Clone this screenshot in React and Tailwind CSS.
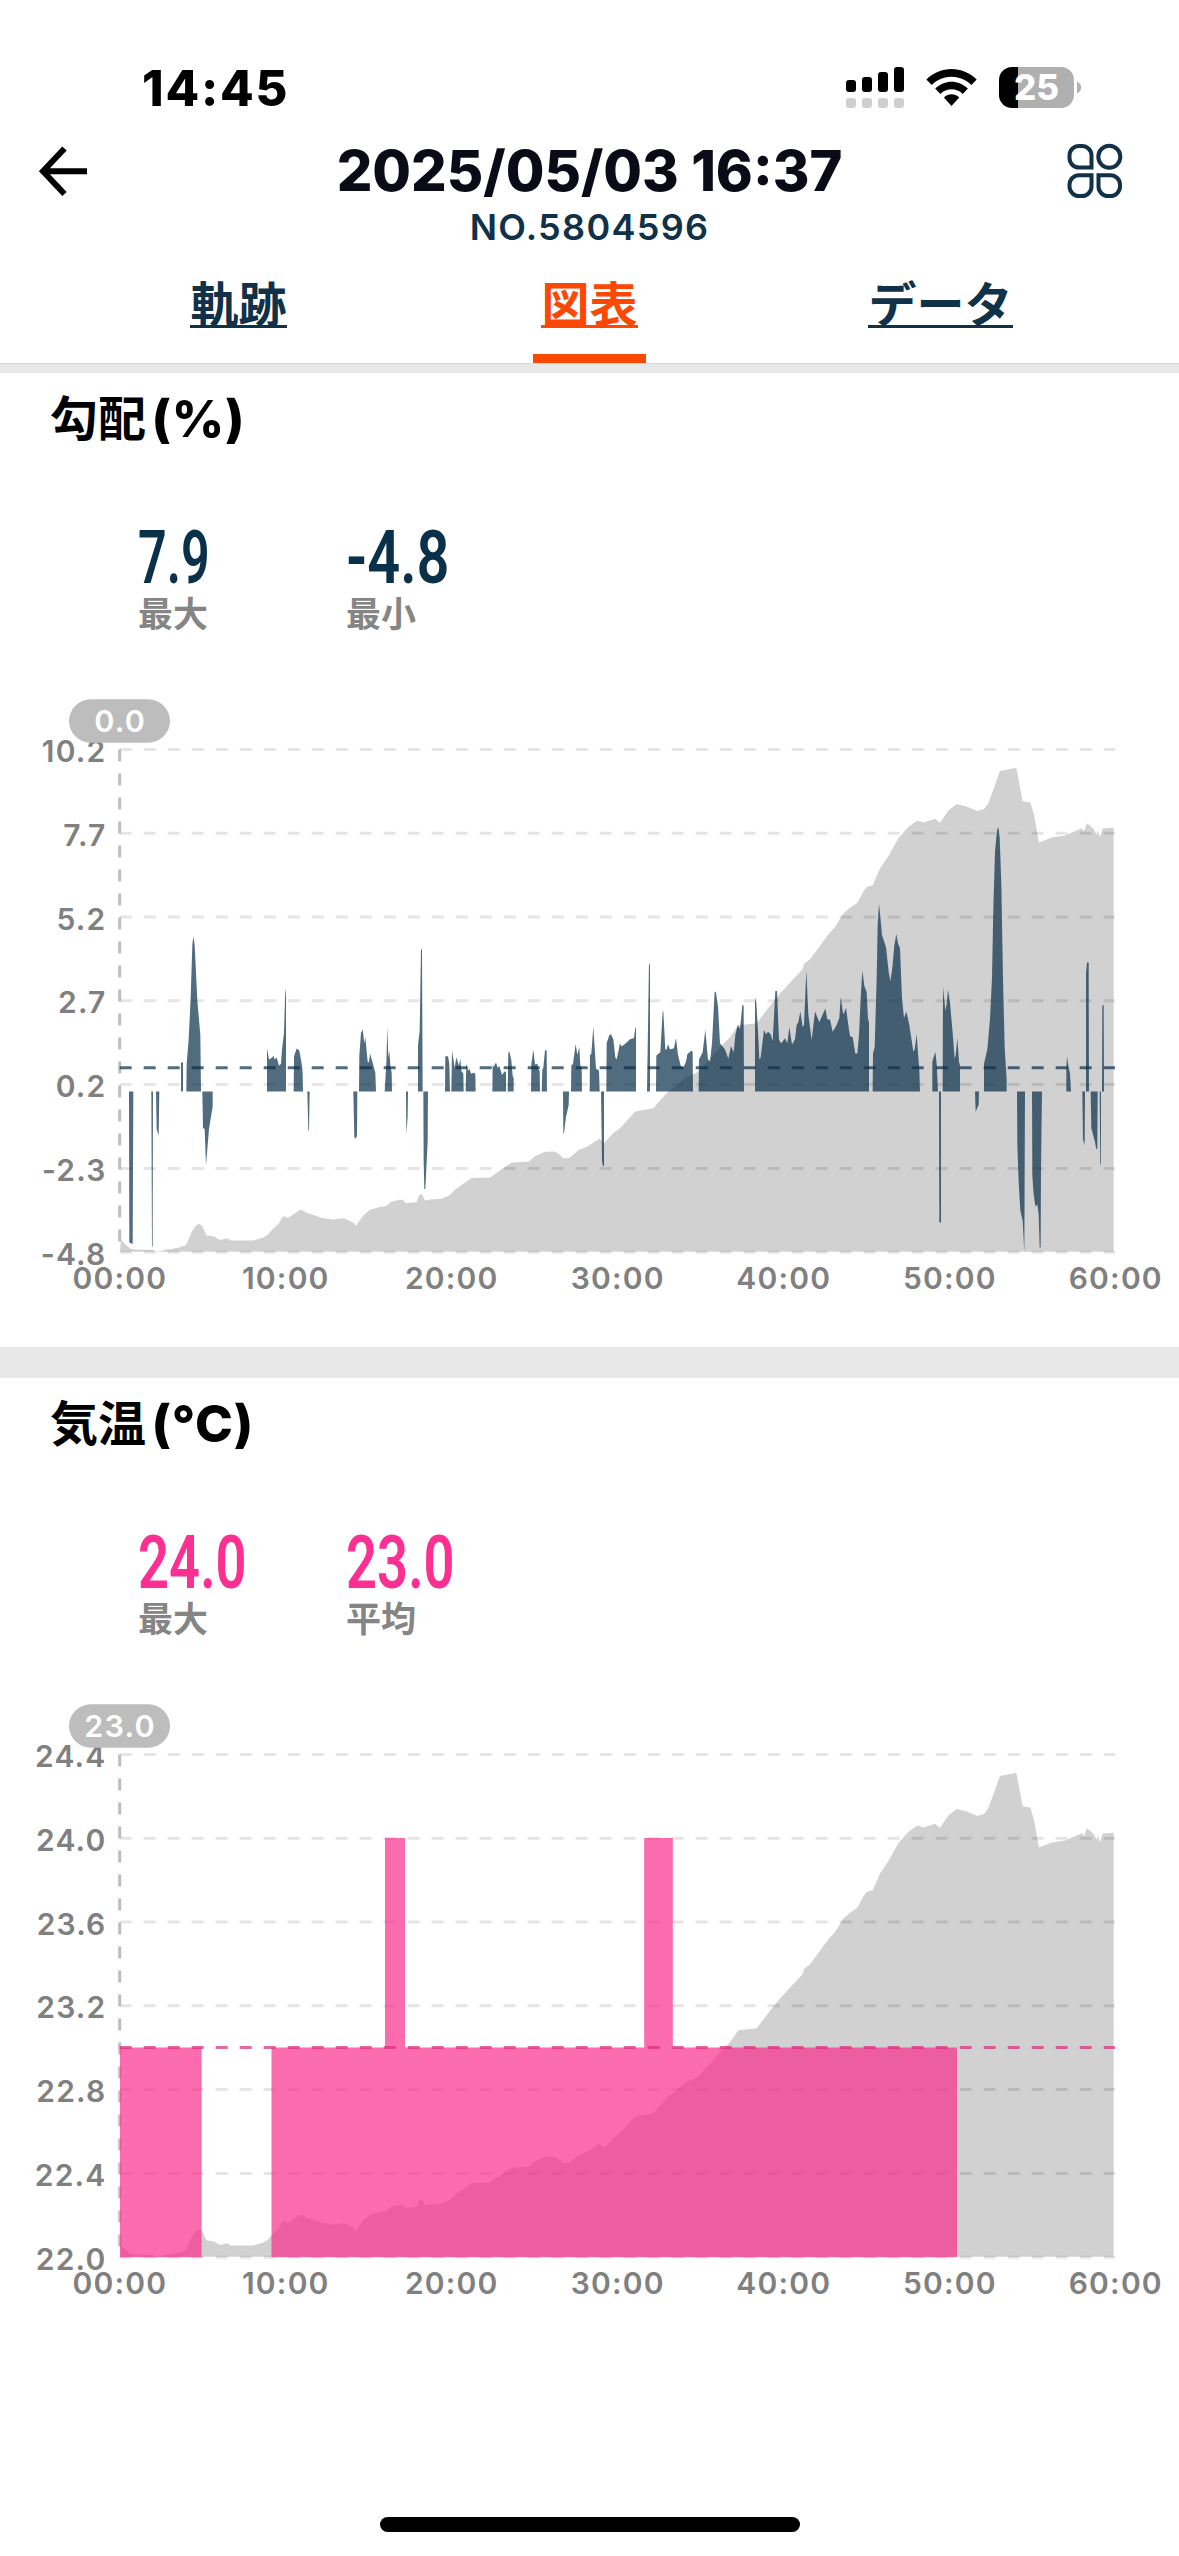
import React from 'react';

const AXIS_X = 119.7;
const END_X = 1115;
const TOP_Y = 69.4;
const STEP_Y = 83.8;
const BOTTOM_Y = TOP_Y + STEP_Y * 6;

const TIME_LABELS = ['00:00', '10:00', '20:00', '30:00', '40:00', '50:00', '60:00'];

// Track samples are split into three tiles, each with its own local origin
const TILES = [
    {
        transform: 'translate(20 0) scale(0.33333 0.40816)',
        elevation:
            '300,1401 303,1372 318,1384 330,1393 345,1395 380,1396 400,1396 403,1400 425,1399 432,1396 455,1394 480,1390 497,1385 505,1372 515,1352 527,1337 537,1332 547,1338 560,1361 580,1363 600,1372 622,1368 632,1373 700,1373 730,1366 742,1360 757,1346 775,1333 790,1313 803,1318 820,1309 842,1297 862,1306 880,1310 905,1318 940,1322 972,1319 1003,1331 1007,1338 1030,1312 1050,1298 1080,1291 1100,1288 1112,1279 1140,1273 1140,1401',
        slopes: [
            '327,1008 328,1378 338,1382 340,1008',
            '394,1008 396,1388 398,1388 399,1008',
            '408,1008 410,1100 416,1116 418,1008',
            '483,1008 483,937 489,937 489,1008',
            '499,1008 500,940 506,880 512,780 517,650 520,627 524,650 532,785 541,870 543,1008',
            '547,1008 549,1097 554,1100 558,1188 567,1100 578,1045 578,1008',
            '741,1008 741,902 747,930 757,925 760,920 764,930 770,925 777,945 783,940 786,905 792,865 796,755 798,770 798,1008',
            '821,1008 822,922 830,903 838,908 846,945 848,965 849,1008',
            '862,1008 865,1104 867,1104 869,1008',
            '1000,1008 1003,1120 1008,1124 1011,1115 1012,1008',
            '1017,1008 1018,920 1023,865 1028,856 1033,890 1036,875 1043,935 1047,937 1050,915 1058,938 1066,962 1068,1008',
            '1094,1008 1099,940 1102,850 1105,925 1108,908 1111,945 1115,962 1116,1008',
        ],
    },
    {
        transform: 'translate(400 0) scale(0.33333 0.40816)',
        elevation:
            '0,1401 0,1273 8,1274 18,1282 50,1279 57,1263 65,1259 75,1275 90,1273 125,1271 150,1262 165,1249 190,1234 215,1220 270,1219 300,1202 335,1182 385,1180 405,1167 435,1156 462,1155 475,1160 490,1172 508,1171 535,1152 565,1142 597,1124 605,1128 612,1135 640,1110 660,1098 705,1058 720,1055 740,1052 760,1049 800,1012 830,992 860,972 890,962 930,928 960,900 990,875 1015,846 1070,841 1110,798 1140,768 1140,1401',
        slopes: [
            '18,1008 19,1113 23,1070 24,1008',
            '54,1008 54,895 59,860 63,660 66,660 68,1008',
            '70,1008 71,1180 73,1247 76,1247 83,1130 84,1008',
            '135,1008 136,922 144,922 148,940 150,1008',
            '154,1008 156,908 164,950 169,925 177,945 181,928 184,958 190,965 191,1008',
            '197,1008 199,940 204,958 208,952 213,965 221,962 226,965 227,1008',
            '277,1008 278,942 281,948 288,937 293,950 298,946 306,968 315,958 318,962 318,1008',
            '323,1008 325,912 328,910 334,932 338,970 341,975 341,1008',
            '393,1008 394,942 400,905 405,942 412,940 416,955 419,958 420,1008',
            '425,1008 427,955 430,950 435,907 440,908 441,1008',
            '489,1008 490,1111 492,1110 498,1070 506,1042 507,1008',
            '513,1008 514,945 519,940 527,892 532,918 538,900 541,945 545,948 546,1008',
            '569,1008 570,920 574,915 580,850 588,952 597,957 599,1008',
            '603,1008 606,1178 609,1192 612,1190 612,1008',
            '619,1008 620,890 628,870 633,868 640,880 646,925 650,930 655,910 660,890 665,898 680,888 690,880 702,877 706,852 708,852 708,1008',
            '741,1008 745,800 747,693 750,700 750,1008',
            '768,1008 769,920 781,912 788,812 790,812 796,905 800,905 804,892 810,905 822,902 828,877 834,918 842,945 850,950 858,935 862,917 875,908 878,912 879,1008',
            '896,1008 897,930 908,912 916,857 924,930 930,935 936,890 944,763 948,765 954,800 960,890 975,905 985,928 993,897 1001,912 1006,870 1013,845 1020,855 1027,797 1031,797 1032,1008',
            '1065,1008 1065,778 1069,790 1074,860 1078,930 1082,925 1092,857 1098,868 1104,862 1112,868 1118,885 1126,762 1131,762 1137,880 1140,886 1140,1008',
        ],
    },
    {
        transform: 'translate(780 0) scale(0.33333 0.40816)',
        elevation:
            '0,1401 0,768 68,708 72,695 90,684 150,618 165,606 190,572 210,558 232,546 250,518 260,507 278,503 300,462 325,432 355,388 385,360 412,344 430,349 465,340 480,350 505,320 530,304 560,310 592,321 612,316 625,302 660,223 709,215 728,297 751,300 762,330 777,398 815,386 855,381 905,363 912,370 921,351 940,364 950,379 953,368 960,385 968,364 1001,362 1001,1401',
        slopes: [
            '0,1008 0,886 4,890 15,878 22,890 28,850 36,893 45,880 50,845 55,838 61,812 68,850 72,845 79,712 85,820 95,882 105,812 118,838 136,805 142,832 150,832 158,862 170,845 178,828 182,777 190,820 198,803 204,840 210,872 218,875 226,915 232,915 237,870 242,780 247,712 253,750 260,765 264,830 267,840 267,1008',
            '278,1008 279,915 284,900 290,730 293,600 297,548 301,580 306,625 318,655 326,715 331,738 337,705 343,650 349,622 354,645 360,658 366,780 372,828 379,812 388,845 400,910 404,905 410,868 415,925 418,955 420,1008',
            '457,1008 457,935 466,911 470,940 474,1008',
            '477,1008 478,1329 483,1329 483,1008',
            '488,1008 489,752 496,810 500,795 504,758 510,790 518,865 524,928 527,920 532,877 537,935 540,945 540,1008',
            '585,1008 587,1058 596,1040 597,1008',
            '612,1008 612,940 622,905 630,830 636,730 640,560 645,420 651,368 655,360 659,385 664,500 669,730 674,900 680,980 680,1008',
            '711,1008 712,1140 716,1230 721,1300 728,1325 733,1402 735,1008',
            '756,1008 757,1215 761,1260 766,1290 772,1285 776,1310 779,1391 782,1390 783,1200 786,1008',
            '859,1008 859,950 861,922 865,945 870,965 873,1008',
            '907,1008 909,1125 913,1140 914,1125 915,1008',
            '918,1008 918,720 921,692 926,692 927,1008',
            '932,1008 934,1098 945,1132 949,1150 952,1148 953,1008',
            '959,1008 961,1187 963,1187 963,1008',
            '966,1008 967,797 971,797 972,1008',
        ],
    },
];

const SlopeSeries = () => (
    <g className="fill-[#082d49]/70">
        {TILES.map((tile) => (
            <g key={tile.transform} transform={tile.transform}>
                {tile.slopes.map((points) => (
                    <polygon key={points} points={points} />
                ))}
            </g>
        ))}
    </g>
);

const TemperatureSeries = () => (
    <path
        className="fill-[#fa2d8d]/70"
        d="M120 572.2V362.5H201.6V572.2ZM271.5 572.2V362.5H385V153H405V362.5H644.2V153H672.8V362.5H957V572.2Z"
    />
);

const Chart = ({ labels, badge, averageY, averageClass, children }) => (
    <svg className="block h-[667px] w-full" viewBox="0 0 1179 667">
        <g className="stroke-[#e5e5e5] stroke-3" strokeDasharray="12 12">
            {labels.map((label, i) => (
                <line key={label} x1={AXIS_X} x2={END_X} y1={TOP_Y + STEP_Y * i} y2={TOP_Y + STEP_Y * i} />
            ))}
        </g>
        <line className="stroke-[#bdbdbd] stroke-3" strokeDasharray="12 12" x1={AXIS_X} x2={AXIS_X} y1={TOP_Y} y2={BOTTOM_Y} />

        {TILES.map((tile) => (
            <polygon key={tile.transform} className="fill-black/18" transform={tile.transform} points={tile.elevation} />
        ))}

        {children}

        <line className={`stroke-3 ${averageClass}`} strokeDasharray="12 12" x1={AXIS_X} x2={END_X} y1={averageY} y2={averageY} />

        <g className="fill-[#808080] text-[30px] font-semibold tracking-[1.2px]">
            {labels.map((label, i) => (
                <text key={label} x="106.5" y={TOP_Y + STEP_Y * i + 12.6} textAnchor="end">{label}</text>
            ))}
            {TIME_LABELS.map((label, i) => (
                <text key={label} x={119.8 + i * 166} y="608.6" textAnchor="middle">{label}</text>
            ))}
        </g>

        <rect className="fill-[#bdbdbd]" x="69" y="19.3" width="101" height="43.4" rx="21.7" />
        <text className="fill-white text-[30.5px] font-semibold tracking-[1.2px]" x="120.1" y="52.4" textAnchor="middle">{badge}</text>
    </svg>
);

const Stat = ({ value, label, valueClass }) => (
    <div className="w-[208px]">
        <div className={`h-[62px] origin-left font-['Roboto',sans-serif] text-[75px] leading-[62px] font-semibold whitespace-nowrap ${valueClass}`}>{value}</div>
        <div className="mt-[5px] h-[42px] text-[35px] leading-[42px] font-bold text-[#858585]">{label}</div>
    </div>
);

const Section = ({ title, unit, stats, children }) => (
    <section>
        <h2 className="flex h-[92px] items-center pl-[50px] text-[48px] font-bold whitespace-pre text-black">
            {`${title} `}
            <span className="-ml-[6px] text-[51px] font-extrabold tracking-[0.8px]">{unit}</span>
        </h2>
        <div className="flex h-[215px] pt-[61px] pl-[138px]">
            {stats.map((stat) => (
                <Stat key={stat.label} {...stat} />
            ))}
        </div>
        {children}
    </section>
);

const StatusBar = () => (
    <div className="flex h-[130px] items-start justify-between pr-[97px] pl-[142px]">
        <span className="mt-[59px] text-[49px] leading-[60px] font-extrabold tracking-[1.8px] text-black">14:45</span>
        <svg className="mt-[60px] h-[56px] w-[236px]" viewBox="846 60 236 56">
            <rect x="846" y="80" width="10" height="12" rx="3" />
            <rect x="862" y="77" width="10" height="15" rx="3" />
            <rect x="878" y="72" width="10" height="20" rx="3" />
            <rect x="894" y="67" width="10" height="25" rx="3" />
            <g className="fill-[#cfcfcf]">
                <rect x="846" y="98" width="10" height="10" rx="3" />
                <rect x="862" y="98" width="10" height="10" rx="3" />
                <rect x="878" y="98" width="10" height="10" rx="3" />
                <rect x="894" y="98" width="10" height="10" rx="3" />
            </g>
            <path d="M926.4 79.6C940 65.5 963 65.5 976.7 79.6L971.4 84.9C960 74 943 74 931.7 84.9Z" />
            <path d="M935.2 88.6C944.5 79.4 958.6 79.4 967.9 88.6L962.7 93.9C956.5 87.8 946.6 87.8 940.4 93.9Z" />
            <path d="M943.9 97.4C948.4 93.2 954.7 93.2 959.2 97.4L951.5 106Z" />
            <path className="fill-[#b0b0b0]" d="M1018 67H1061A13 13 0 0 1 1074 80V95A13 13 0 0 1 1061 108H1018Z" />
            <path d="M1018 67H1012A13 13 0 0 0 999 80V95A13 13 0 0 0 1012 108H1018Z" />
            <path className="fill-[#b0b0b0]" d="M1077 81.5C1082.5 84 1082.5 91 1077 93.5Z" />
            <text className="fill-white text-[35px] font-extrabold" x="1036.5" y="100" textAnchor="middle">25</text>
        </svg>
    </div>
);

const Header = () => (
    <header className="grid h-[130px] grid-cols-[1fr_auto_1fr] items-start px-[38px]">
        <svg className="mt-[15px] h-[52px] w-[52px] fill-none stroke-black stroke-6" viewBox="38 145 52 52">
            <path d="M64.5 148.5L43 171.2L64.5 194M43 171.2H87" />
        </svg>
        <div className="flex flex-col items-center">
            <h1 className="mt-[7px] text-[56px] leading-[68px] font-extrabold text-[#0b0b18]">2025/05/03 16:37</h1>
            <p className="text-[36px] leading-[44px] font-semibold tracking-[1.3px] text-[#113148]">NO.5804596</p>
        </div>
        <svg className="mt-[12px] mr-[17px] h-[58px] w-[58px] justify-self-end fill-none stroke-[#113148] stroke-4" viewBox="1066 142 58 58">
            <path d="M1079 146H1082A9.5 9.5 0 0 1 1091.5 155.5V167.5H1079A9.5 9.5 0 0 1 1069.5 158V155.5A9.5 9.5 0 0 1 1079 146Z" />
            <circle cx="1109.3" cy="156.8" r="11" />
            <path d="M1091.5 175.2V186.5A9.5 9.5 0 0 1 1082 196H1079A9.5 9.5 0 0 1 1069.5 186.5V184.7A9.5 9.5 0 0 1 1079 175.2Z" />
            <path d="M1098.5 175.2H1110.5A9.5 9.5 0 0 1 1120 184.7V186.5A9.5 9.5 0 0 1 1110.5 196H1108A9.5 9.5 0 0 1 1098.5 186.5Z" />
        </svg>
    </header>
);

const TABS = [
    { label: '軌跡', active: false },
    { label: '図表', active: true },
    { label: 'データ', active: false },
];

const Tabs = () => (
    <nav className="grid h-[103px] grid-cols-3 px-[63px]">
        {TABS.map(({ label, active }) => (
            <div key={label} className={`flex flex-col items-center justify-between ${active ? 'text-[#fb4805]' : 'text-[#113148]'}`}>
                <span className="mt-[24px] border-b-3 border-current text-[48px] leading-[41px] font-bold">{label}</span>
                {active && <span className="h-[9px] w-[113px] bg-[#fb4805]" />}
            </div>
        ))}
    </nav>
);

const App = () => (
    <div className="flex h-[2556px] w-[1179px] flex-col overflow-hidden bg-white font-['Inter','Noto_Sans_CJK_JP',sans-serif]">
        <StatusBar />
        <Header />
        <Tabs />
        <div className="h-[10px] shrink-0 border-t border-[#d8d8d8] bg-[#e8e8e8]" />

        <Section
            title="勾配"
            unit="(%)"
            stats={[
                { value: '7.9', label: '最大', valueClass: 'text-[#0b3049] scale-x-[0.67]' },
                { value: '-4.8', label: '最小', valueClass: 'text-[#0b3049] scale-x-[0.77]' },
            ]}
        >
            <Chart
                labels={['10.2', '7.7', '5.2', '2.7', '0.2', '-2.3', '-4.8']}
                badge="0.0"
                averageY={387.8}
                averageClass="stroke-[#082d49]/70"
            >
                <SlopeSeries />
            </Chart>
        </Section>

        <div className="h-[31px] shrink-0 bg-[#e8e8e8]" />

        <Section
            title="気温"
            unit="(°C)"
            stats={[
                { value: '24.0', label: '最大', valueClass: 'text-[#fc2f92] scale-x-[0.725]' },
                { value: '23.0', label: '平均', valueClass: 'text-[#fc2f92] scale-x-[0.725]' },
            ]}
        >
            <Chart
                labels={['24.4', '24.0', '23.6', '23.2', '22.8', '22.4', '22.0']}
                badge="23.0"
                averageY={362.6}
                averageClass="stroke-[#d92a7c]/70"
            >
                <TemperatureSeries />
            </Chart>
        </Section>

        <div className="mx-auto mt-auto mb-[24px] h-[15px] w-[420px] shrink-0 rounded-full bg-black" />
    </div>
);

export default App;
